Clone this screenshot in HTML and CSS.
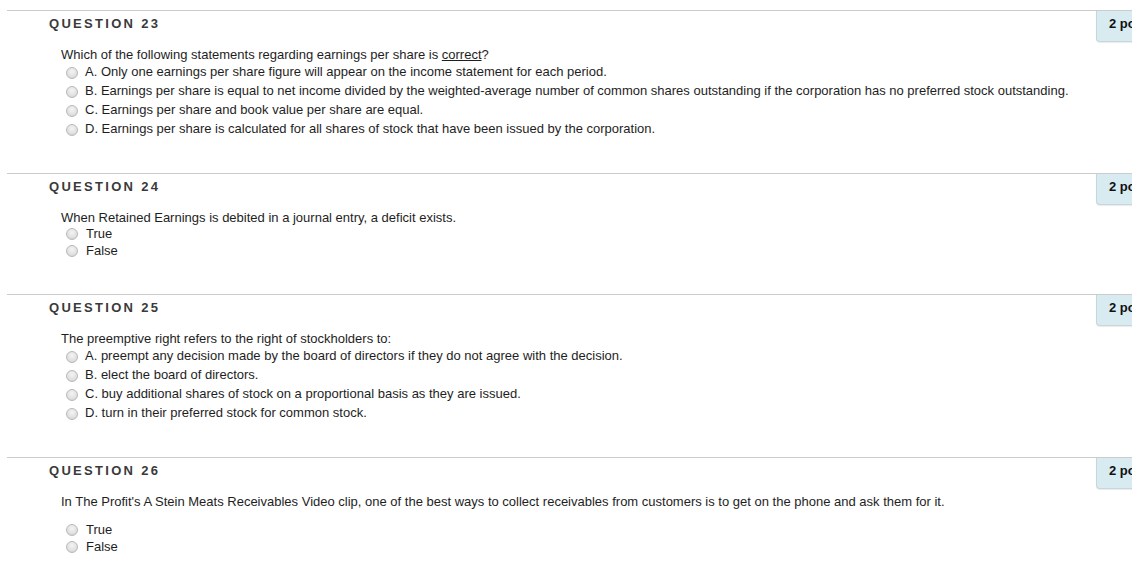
FILE: index.html
```html
<!DOCTYPE html>
<html>
<head>
<meta charset="utf-8">
<link rel="stylesheet" href="styles.css">
</head>
<body>
<div class="page">
  <section class="question">
    <div class="q-head">
      <h3 class="q-title">QUESTION 23</h3>
      <div class="points">2 points</div>
    </div>
    <div class="q-text">Which of the following statements regarding earnings per share is <u>correct</u>?</div>
    <ul class="options mc">
      <li><span class="radio"></span>A. Only one earnings per share figure will appear on the income statement for each period.</li>
      <li><span class="radio"></span>B. Earnings per share is equal to net income divided by the weighted-average number of common shares outstanding if the corporation has no preferred stock outstanding.</li>
      <li><span class="radio"></span>C. Earnings per share and book value per share are equal.</li>
      <li><span class="radio"></span>D. Earnings per share is calculated for all shares of stock that have been issued by the corporation.</li>
    </ul>
  </section>
  <section class="question">
    <div class="q-head">
      <h3 class="q-title">QUESTION 24</h3>
      <div class="points">2 points</div>
    </div>
    <div class="q-text">When Retained Earnings is debited in a journal entry, a deficit exists.</div>
    <ul class="options tf">
      <li><span class="radio"></span>True</li>
      <li><span class="radio"></span>False</li>
    </ul>
  </section>
  <section class="question">
    <div class="q-head">
      <h3 class="q-title">QUESTION 25</h3>
      <div class="points">2 points</div>
    </div>
    <div class="q-text">The preemptive right refers to the right of stockholders to:</div>
    <ul class="options mc">
      <li><span class="radio"></span>A. preempt any decision made by the board of directors if they do not agree with the decision.</li>
      <li><span class="radio"></span>B. elect the board of directors.</li>
      <li><span class="radio"></span>C. buy additional shares of stock on a proportional basis as they are issued.</li>
      <li><span class="radio"></span>D. turn in their preferred stock for common stock.</li>
    </ul>
  </section>
  <section class="question">
    <div class="q-head">
      <h3 class="q-title">QUESTION 26</h3>
      <div class="points">2 points</div>
    </div>
    <div class="q-text spaced">In The Profit's A Stein Meats Receivables Video clip, one of the best ways to collect receivables from customers is to get on the phone and ask them for it.</div>
    <ul class="options tf">
      <li><span class="radio"></span>True</li>
      <li><span class="radio"></span>False</li>
    </ul>
  </section>
</div>
</body>
</html>
```

FILE: styles.css
```css
html, body {
  margin: 0;
  padding: 0;
  background: #ffffff;
  overflow: hidden;
}
body {
  font-family: "Liberation Sans", Arial, sans-serif;
  font-size: 13px;
  color: #1e1e1e;
}
.page {
  width: 1176px;
  padding-top: 10px;
}
.question {
  margin-left: 7px;
  border-top: 1px solid #cccccc;
  padding-bottom: 35px;
}
.q-head {
  display: flex;
  align-items: flex-start;
}
.q-title {
  margin: 0;
  padding: 4px 0 0 42px;
  line-height: 17px;
  font-size: 13px;
  font-weight: bold;
  letter-spacing: 2.3px;
  color: #3a3a3a;
}
.points {
  margin-left: auto;
  width: 80px;
  height: 31px;
  box-sizing: border-box;
  padding: 4px 0 0 12px;
  line-height: 17px;
  font-size: 13px;
  font-weight: bold;
  color: #111111;
  white-space: nowrap;
  background: #d7ebf1;
  border: 1px solid #c6d7dc;
  border-top: none;
  border-radius: 0 0 0 4px;
  box-shadow: 0 1px 1px rgba(0,0,0,0.08);
  overflow: hidden;
}
.q-text {
  margin-top: 5px;
  padding-left: 54px;
  line-height: 15px;
}
.q-text.spaced {
  margin-bottom: 12px;
}
.options {
  list-style: none;
  margin: 0;
  padding: 0 0 0 59px;
}
.options li {
  display: flex;
  align-items: center;
  white-space: nowrap;
}
.options.mc li {
  height: 19px;
}
.options.tf li {
  height: 17px;
}
.radio {
  display: inline-block;
  width: 12px;
  height: 12px;
  box-sizing: border-box;
  margin: 3px 8px 0 0;
  border-radius: 50%;
  border: 1px solid #b9b9b9;
  background: radial-gradient(circle at 50% 35%, #f4f4f4 0%, #e2e2e2 55%, #cfcfcf 100%);
  flex: none;
}
.options.mc .radio {
  margin-right: 7px;
}
.options.tf .radio {
  margin-top: 1px;
}
```
